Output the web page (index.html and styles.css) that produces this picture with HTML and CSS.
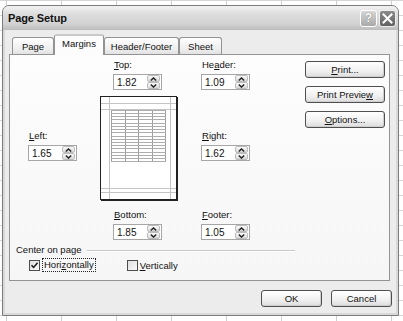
FILE: index.html
```html
<!DOCTYPE html>
<html lang="en">
<head>
    <meta charset="UTF-8">
    <title>Page Setup</title>
    <link rel="stylesheet" href="styles.css">
</head>
<body>
    <div class="dialog">
        <div class="titlebar">
            <span class="title">Page Setup</span>
            <div class="title-buttons">
                <span class="tb-btn help">?</span>
                <span class="tb-btn close">
                    <svg width="11" height="11" viewBox="0 0 11 11"><path d="M1.5 1.5L9.5 9.5M9.5 1.5L1.5 9.5" stroke="#fff" stroke-width="2" stroke-linecap="square"/></svg>
                </span>
            </div>
        </div>
        <div class="dialog-body">
            <div class="tabs">
                <span class="tab tab-page">Page</span>
                <span class="tab tab-margins active">Margins</span>
                <span class="tab tab-hf">Header/Footer</span>
                <span class="tab tab-sheet">Sheet</span>
            </div>
            <div class="panel">
                <div class="panel-top">
                    <div class="margins">
                        <div class="field f-top">
                            <label><u>T</u>op:</label>
                            <div class="spin-input"><span class="value">1.82</span><span class="spin"><span class="spin-btn"><svg width="7" height="4" viewBox="0 0 7 4"><path d="M0.8 3.4L3.5 0.9L6.2 3.4" fill="none" stroke="#222" stroke-width="1.4"/></svg></span><span class="spin-btn"><svg width="7" height="4" viewBox="0 0 7 4"><path d="M0.8 0.6L3.5 3.1L6.2 0.6" fill="none" stroke="#222" stroke-width="1.4"/></svg></span></span></div>
                        </div>
                        <div class="field f-header">
                            <label>He<u>a</u>der:</label>
                            <div class="spin-input"><span class="value">1.09</span><span class="spin"><span class="spin-btn"><svg width="7" height="4" viewBox="0 0 7 4"><path d="M0.8 3.4L3.5 0.9L6.2 3.4" fill="none" stroke="#222" stroke-width="1.4"/></svg></span><span class="spin-btn"><svg width="7" height="4" viewBox="0 0 7 4"><path d="M0.8 0.6L3.5 3.1L6.2 0.6" fill="none" stroke="#222" stroke-width="1.4"/></svg></span></span></div>
                        </div>
                        <div class="field f-left">
                            <label><u>L</u>eft:</label>
                            <div class="spin-input"><span class="value">1.65</span><span class="spin"><span class="spin-btn"><svg width="7" height="4" viewBox="0 0 7 4"><path d="M0.8 3.4L3.5 0.9L6.2 3.4" fill="none" stroke="#222" stroke-width="1.4"/></svg></span><span class="spin-btn"><svg width="7" height="4" viewBox="0 0 7 4"><path d="M0.8 0.6L3.5 3.1L6.2 0.6" fill="none" stroke="#222" stroke-width="1.4"/></svg></span></span></div>
                        </div>
                        <div class="preview">
                            <svg width="79" height="106" viewBox="0 0 79 106" shape-rendering="crispEdges">
                                <rect x="0.5" y="0.5" width="76" height="103" fill="#fff" stroke="#222"/>
                                <path d="M77.5 1V105M1 104.5H78" stroke="#222"/>
                                <path d="M1 7.5H76M1 13.5H76M1 92.5H76M1 96.5H76M9.5 1V103M70.5 1V103" stroke="#c4c4c4"/>
                                <path d="M11.5 14V66M25.5 14V66M38.5 14V66M52.5 14V66M65.5 14V66" stroke="#9c9c9c"/>
                                <path d="M11 14.5H66M11 17.5H66M11 20.5H66M11 23.5H66M11 27.5H66M11 30.5H66M11 33.5H66M11 36.5H66M11 40.5H66M11 43.5H66M11 46.5H66M11 49.5H66M11 52.5H66M11 56.5H66M11 59.5H66M11 62.5H66M11 65.5H66" stroke="#adadad"/>
                            </svg>
                        </div>
                        <div class="field f-right">
                            <label><u>R</u>ight:</label>
                            <div class="spin-input"><span class="value">1.62</span><span class="spin"><span class="spin-btn"><svg width="7" height="4" viewBox="0 0 7 4"><path d="M0.8 3.4L3.5 0.9L6.2 3.4" fill="none" stroke="#222" stroke-width="1.4"/></svg></span><span class="spin-btn"><svg width="7" height="4" viewBox="0 0 7 4"><path d="M0.8 0.6L3.5 3.1L6.2 0.6" fill="none" stroke="#222" stroke-width="1.4"/></svg></span></span></div>
                        </div>
                        <div class="field f-bottom">
                            <label><u>B</u>ottom:</label>
                            <div class="spin-input"><span class="value">1.85</span><span class="spin"><span class="spin-btn"><svg width="7" height="4" viewBox="0 0 7 4"><path d="M0.8 3.4L3.5 0.9L6.2 3.4" fill="none" stroke="#222" stroke-width="1.4"/></svg></span><span class="spin-btn"><svg width="7" height="4" viewBox="0 0 7 4"><path d="M0.8 0.6L3.5 3.1L6.2 0.6" fill="none" stroke="#222" stroke-width="1.4"/></svg></span></span></div>
                        </div>
                        <div class="field f-footer">
                            <label><u>F</u>ooter:</label>
                            <div class="spin-input"><span class="value">1.05</span><span class="spin"><span class="spin-btn"><svg width="7" height="4" viewBox="0 0 7 4"><path d="M0.8 3.4L3.5 0.9L6.2 3.4" fill="none" stroke="#222" stroke-width="1.4"/></svg></span><span class="spin-btn"><svg width="7" height="4" viewBox="0 0 7 4"><path d="M0.8 0.6L3.5 3.1L6.2 0.6" fill="none" stroke="#222" stroke-width="1.4"/></svg></span></span></div>
                        </div>
                    </div>
                    <div class="actions">
                        <button><u>P</u>rint...</button>
                        <button>Print Previe<u>w</u></button>
                        <button><u>O</u>ptions...</button>
                    </div>
                </div>
                <div class="center-group">
                    <div class="group-title"><span>Center on page</span><span class="group-line"></span></div>
                    <div class="checks">
                        <span class="check-item">
                            <span class="checkbox"><svg width="9" height="9" viewBox="0 0 9 9"><path d="M1.5 4.2L3.6 6.4L7.6 1.8" fill="none" stroke="#222" stroke-width="1.6"/></svg></span>
                            <span class="focus">Hori<u>z</u>ontally</span>
                        </span>
                        <span class="check-item item-vert">
                            <span class="checkbox"></span>
                            <span><u>V</u>ertically</span>
                        </span>
                    </div>
                </div>
            </div>
            <div class="dialog-buttons">
                <button>OK</button>
                <button>Cancel</button>
            </div>
        </div>
    </div>
</body>
</html>
```

FILE: styles.css
```css
html, body {
    height: 100%;
}

body {
    margin: 0;
    padding: 5px 4px 0 2px;
    box-sizing: border-box;
    font-family: "Liberation Sans", Arial, sans-serif;
    font-size: 9.5px;
    color: #111;
    background-color: #fff;
    background-image:
        linear-gradient(90deg, #cfcfcf 1px, transparent 1px),
        linear-gradient(#d6d6d6 1px, transparent 1px);
    background-size: 55px 15px;
    background-position: 6px 0;
}

.dialog {
    width: 397px;
    height: 311px;
    box-sizing: border-box;
    border: 1px solid #7c7c7c;
    border-radius: 7px 7px 0 0;
    background-color: #d9d9d9;
    display: flex;
    flex-direction: column;
}

.titlebar {
    height: 24px;
    flex: none;
    display: flex;
    align-items: center;
    justify-content: space-between;
    padding: 0 2px 0 5px;
    border-radius: 6px 6px 0 0;
    background: linear-gradient(#f2f2f2, #dcdcdc 35%, #d2d2d2 75%, #bcbcbc);
}

.title {
    font-weight: bold;
    font-size: 11px;
    color: #111;
    letter-spacing: -0.1px;
}

.title-buttons {
    display: flex;
    gap: 2px;
}

.tb-btn {
    width: 17px;
    height: 17px;
    box-sizing: border-box;
    border-radius: 3px;
    display: flex;
    align-items: center;
    justify-content: center;
}

.help {
    border: 1px solid #fff;
    background: linear-gradient(#d6d6d6, #a9a9a9);
    color: #fff;
    font-weight: bold;
    font-size: 12px;
    text-shadow: 0 0 1px #555;
}

.close {
    border: 1px solid #eee;
    background: linear-gradient(#8a8a8a, #626262);
}

.dialog-body {
    flex: 1;
    margin: 0 2px 2px;
    background-color: #ececec;
    padding: 5px 0 0 4px;
    display: flex;
    flex-direction: column;
}

/* tabs */
.tabs {
    display: flex;
    align-items: flex-end;
    padding-left: 3px;
    height: 20px;
    margin-bottom: -1px;
}

.tab {
    height: 17px;
    box-sizing: border-box;
    border: 1px solid #939393;
    border-bottom: none;
    border-radius: 3px 3px 0 0;
    background: linear-gradient(#fefefe, #eeeeee 70%, #e2e2e2);
    display: flex;
    align-items: center;
    justify-content: center;
    padding-top: 1px;
    margin-bottom: 1px;
}

.tab-page { width: 42px; }
.tab-margins { width: 50px; }
.tab-hf { width: 75px; }
.tab-sheet { width: 43px; }

.tab.active {
    height: 21px;
    margin-bottom: 0;
    padding: 0 0 4px;
    background: #fcfcfc;
    border-top: 2px solid #c9c9c9;
    position: relative;
    z-index: 1;
}

.panel {
    width: 381px;
    height: 227px;
    box-sizing: border-box;
    border: 1px solid #939393;
    background: linear-gradient(#fdfdfd, #f6f6f6);
    padding: 3px 4px 0 6px;
    display: flex;
    flex-direction: column;
}

.panel-top {
    display: flex;
}

.margins {
    margin-left: 12px;
    display: grid;
    grid-template-columns: 49px 23px 78px 23px 49px;
    grid-template-areas:
        ".    . top    . header"
        "left . preview . right"
        ".    . bottom . footer";
    row-gap: 6px;
}

.f-top { grid-area: top; padding-left: 13px; }
.f-header { grid-area: header; }
.f-left { grid-area: left; align-self: start; margin-top: 33px; }
.f-right { grid-area: right; align-self: start; margin-top: 33px; }
.f-bottom { grid-area: bottom; padding-left: 13px; }
.f-footer { grid-area: footer; }

.preview {
    grid-area: preview;
    height: 106px;
}

.preview svg {
    display: block;
}

.field label {
    display: block;
    line-height: 13px;
    margin-bottom: 3px;
    padding-left: 1px;
}

.spin-input {
    width: 49px;
    height: 16px;
    box-sizing: border-box;
    border: 1px solid #a6a6a6;
    background: #fff;
    display: flex;
    align-items: center;
    justify-content: space-between;
    padding: 0 1px 0 3px;
}

.value {
    font-size: 10px;
}

.spin {
    width: 13px;
    height: 14px;
    display: flex;
    flex-direction: column;
}

.spin-btn {
    flex: 1;
    box-sizing: border-box;
    border: 1px solid #bcbcbc;
    border-radius: 2px;
    background: linear-gradient(#fbfbfb, #d9d9d9);
    display: flex;
    align-items: center;
    justify-content: center;
}

.spin-btn svg {
    display: block;
}

button {
    font-family: "Liberation Sans", Arial, sans-serif;
    font-size: 9.5px;
    color: #111;
    height: 17px;
    padding: 0;
    border: 1px solid #4f4f4f;
    border-radius: 3px;
    background: linear-gradient(#ffffff, #f0f0f0 60%, #dcdcdc);
    box-shadow: inset -1px -1px 0 #cfcfcf;
}

.actions {
    margin-left: auto;
    margin-top: 3px;
    display: flex;
    flex-direction: column;
    gap: 8px;
}

.actions button {
    width: 80px;
}

/* center on page */
.center-group {
    width: 279px;
    margin-top: 3px;
}

.group-title {
    display: flex;
    align-items: center;
    gap: 5px;
    line-height: 13px;
}

.group-line {
    flex: 1;
    height: 0;
    border-top: 1px solid #c8c8c8;
    border-bottom: 1px solid #fff;
    margin-top: 2px;
}

.checks {
    display: flex;
    padding: 2px 0 0 13px;
    align-items: center;
}

.check-item {
    display: flex;
    align-items: center;
    gap: 2px;
}

.item-vert {
    margin-left: 31px;
}

.checkbox {
    width: 11px;
    height: 11px;
    box-sizing: border-box;
    border: 1px solid #4d4d4d;
    background: linear-gradient(135deg, #e0e0e0, #fafafa);
    display: flex;
    align-items: center;
    justify-content: center;
}

.focus {
    border: 1px dotted #222;
    padding: 0 1px;
    line-height: 12px;
}

.dialog-buttons {
    display: flex;
    justify-content: flex-end;
    gap: 9px;
    padding: 9px 4px 0 0;
}

.dialog-buttons button {
    width: 61px;
}
```
